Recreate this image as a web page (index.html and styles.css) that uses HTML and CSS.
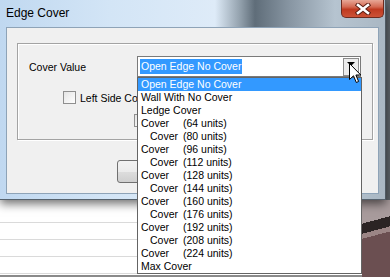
FILE: index.html
```html
<!DOCTYPE html>
<html lang="en">
<head>
    <meta charset="UTF-8">
    <meta name="viewport" content="width=device-width, initial-scale=1.0">
    <title>Edge Cover</title>
    <link rel="stylesheet" href="styles.css">
</head>
<body>
    <div class="screen">
        <div class="window">
            <div class="titlebar">
                <span class="title">Edge Cover</span>
                <div class="close">
                    <svg width="16" height="12" viewBox="0 0 16 12">
                        <path d="M3 2 L13 10 M13 2 L3 10" stroke="#5a1d12" stroke-width="4.5" stroke-linecap="square"/>
                        <path d="M3 2 L13 10 M13 2 L3 10" stroke="#fff" stroke-width="2.6" stroke-linecap="square"/>
                    </svg>
                </div>
            </div>
            <div class="client">
                <div class="group">
                    <div class="row">
                        <label class="label">Cover Value</label>
                        <div class="combo">
                            <span class="combo-text">Open Edge No Cover</span>
                            <span class="combo-btn"><span class="tri"></span></span>
                        </div>
                    </div>
                    <div class="row check-row">
                        <span class="check"></span>
                        <span class="check-text">Left Side Cover</span>
                    </div>
                    <div class="row check-row second">
                        <span class="check"></span>
                    </div>
                </div>
                <div class="buttons">
                    <button class="btn"></button>
                </div>
            </div>
        </div>

        <div class="below">
            <div class="sheet"></div>
            <div class="scene"></div>
        </div>

        <ul class="droplist">
            <li class="selected">Open Edge No Cover</li>
            <li>Wall With No Cover</li>
            <li>Ledge Cover</li>
            <li><span class="name">Cover</span>(64 units)</li>
            <li><span class="name indent">Cover</span>(80 units)</li>
            <li><span class="name">Cover</span>(96 units)</li>
            <li><span class="name indent">Cover</span>(112 units)</li>
            <li><span class="name">Cover</span>(128 units)</li>
            <li><span class="name indent">Cover</span>(144 units)</li>
            <li><span class="name">Cover</span>(160 units)</li>
            <li><span class="name indent">Cover</span>(176 units)</li>
            <li><span class="name">Cover</span>(192 units)</li>
            <li><span class="name indent">Cover</span>(208 units)</li>
            <li><span class="name">Cover</span>(224 units)</li>
            <li>Max Cover</li>
        </ul>

        <svg class="cursor" width="13" height="21" viewBox="0 0 13 21">
            <path d="M0.5 0.5 L0.5 16.5 L4.5 12.8 L7.3 19.5 L9.6 18.5 L6.9 12 L11.8 12 Z" fill="#fff" stroke="#000" stroke-width="1" stroke-linejoin="miter"/>
        </svg>
    </div>
</body>
</html>
```

FILE: styles.css
```css
* {
    box-sizing: border-box;
}

body {
    margin: 0;
    font-family: "Liberation Sans", Arial, sans-serif;
    font-size: 10.5px;
    color: #000;
}

.screen {
    position: relative;
    width: 390px;
    height: 277px;
    overflow: hidden;
    background: #5e656b;
}

/* dialog window */

.window {
    position: relative;
    z-index: 1;
    width: 386px;
    padding: 0 6px 5px;
    background: linear-gradient(to right, #c0d8f0 0, #d3e5f6 110px, #deebf8 215px, #93a1ad 240px, #5f6d79 255px, #8896a3 290px, #b6c4d0 335px, #a9b7c3 386px);
    border-right: 1px solid #4f5a63;
    border-bottom: 1px solid #56626d;
    box-shadow: 0 4px 9px rgba(0, 0, 0, 0.55);
}

.titlebar {
    height: 27px;
    display: flex;
    justify-content: space-between;
}

.title {
    font-size: 12px;
    line-height: 27px;
    color: #000;
}

.close {
    width: 43px;
    height: 18px;
    margin-right: -5px;
    display: flex;
    align-items: center;
    justify-content: center;
    background: linear-gradient(#e7a796 0, #d46a53 40%, #bf3a20 55%, #cc5236 100%);
    border: 1px solid #6d2b1f;
    border-top: none;
    border-radius: 0 0 5px 5px;
}

.client {
    height: 167px;
    background: #f0f0f0;
    border: 1px solid #8ea3b7;
    padding: 15px 0 0 10px;
}

.group {
    width: 356px;
    height: 97px;
    border: 1px solid #a3a3a3;
    box-shadow: inset 1px 1px 0 #fff, 1px 1px 0 #fff;
    padding: 12px 0 0 11px;
}

.row {
    display: flex;
    align-items: center;
}

.label {
    width: 108px;
}

.combo {
    width: 224px;
    height: 21px;
    display: flex;
    align-items: center;
    padding: 0 1px 0 2px;
    background: #fff;
    border: 1px solid #7a7a7a;
}

.combo-text {
    height: 15px;
    line-height: 15px;
    padding: 0 1px;
    background: #3399ff;
    color: #fff;
}

.combo-btn {
    width: 16px;
    height: 18px;
    margin-left: auto;
    display: flex;
    justify-content: center;
    padding-top: 3px;
    background: #ececec;
    border: 1px solid #8c8c8c;
}

.tri {
    width: 0;
    height: 0;
    border-left: 4px solid transparent;
    border-right: 4px solid transparent;
    border-top: 4px solid #000;
}

.check-row {
    margin: 14px 0 0 34px;
    gap: 4px;
}

.check-row.second {
    height: 13px;
    margin: 10px 0 0 105px;
}

/* the open list covers the rest of this label */
.check-text {
    width: 57px;
    overflow: hidden;
    white-space: nowrap;
}

.check {
    width: 13px;
    height: 13px;
    background: linear-gradient(135deg, #e4e4e4, #fff);
    border: 1px solid #8f8f8f;
}

.buttons {
    padding: 20px 0 0 100px;
}

.btn {
    display: block;
    width: 75px;
    height: 23px;
    background: linear-gradient(#f2f2f2 0, #ebebeb 50%, #dddddd 51%, #cfcfcf 100%);
    border: 1px solid #707070;
    border-radius: 3px;
}

/* stuff behind the dialog */

.below {
    display: flex;
    height: 77px;
}

.sheet {
    flex: 1;
    background-color: #fff;
    background-image: repeating-linear-gradient(to bottom, transparent 0 16px, #dadada 16px 17px);
    background-position: 0 6px;
    border-bottom: 2px solid #8a8a8a;
}

.scene {
    width: 28px;
    background: linear-gradient(165deg, #a89b9c 0 28%, #2b2424 28% 40%, #9b8585 40% 46%, #6b4f51 46% 100%);
}

/* open dropdown */

.droplist {
    position: absolute;
    z-index: 2;
    left: 137px;
    top: 77px;
    width: 225px;
    height: 197px;
    margin: 0;
    padding: 0;
    list-style: none;
    background: #fff;
    border: 1px solid #646464;
}

.droplist li {
    display: flex;
    height: 13px;
    line-height: 13px;
    padding-left: 3px;
    white-space: nowrap;
}

.droplist li.selected {
    background: #3399ff;
    color: #fff;
}

.name {
    width: 42px;
}

.name.indent {
    padding-left: 9px;
}

.cursor {
    position: absolute;
    z-index: 3;
    left: 349px;
    top: 63px;
}
```
